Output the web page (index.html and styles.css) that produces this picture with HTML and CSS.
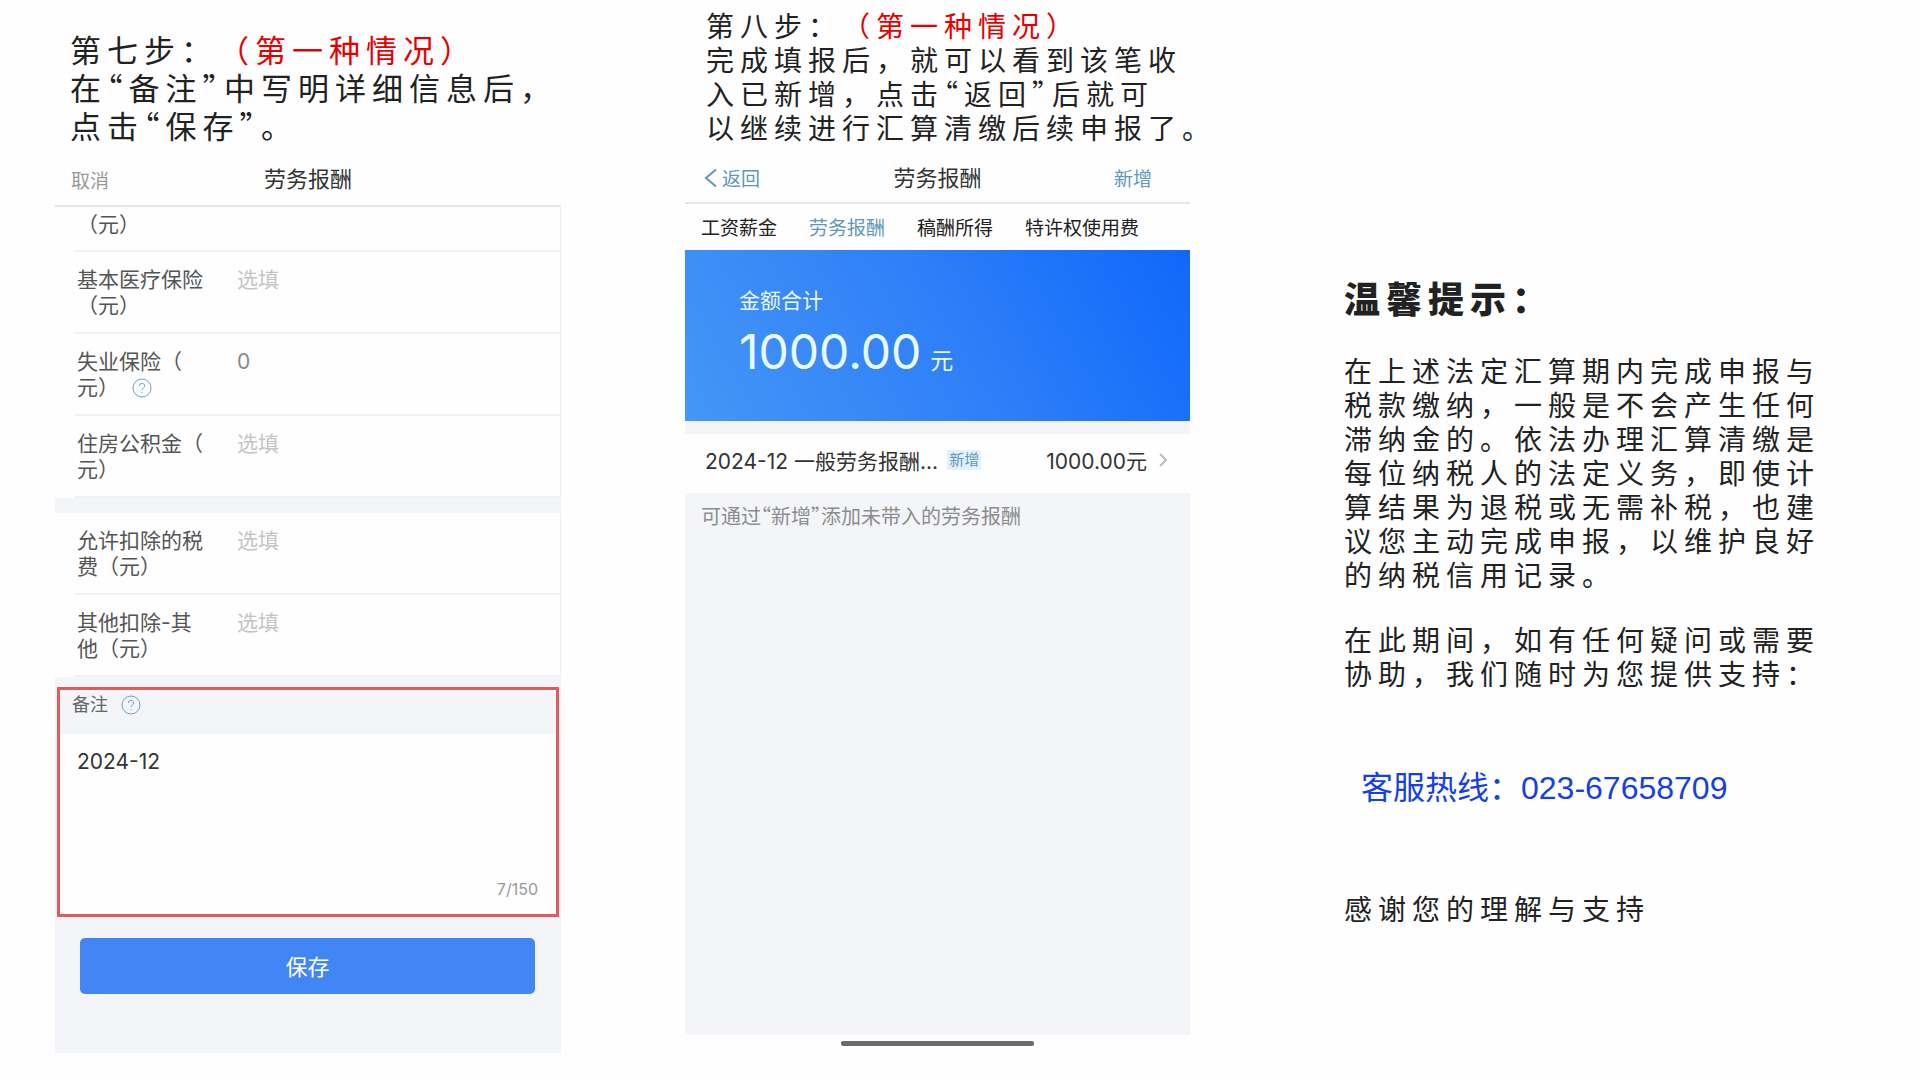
FILE: index.html
```html
<!DOCTYPE html>
<html lang="zh-CN">
<head>
<meta charset="utf-8">
<title>劳务报酬</title>
<link rel="stylesheet" href="styles.css">
</head>
<body>
<main class="page">
  <section class="step">
    <h2 class="intro intro-large">第七步：<span class="case">（第一种情况）</span><br>在<span class="quote">“</span>备注<span class="quote">”</span>中写明详细信息后，<br>点击<span class="quote">“</span>保存<span class="quote">”</span>。</h2>
    <form class="phone phone-form">
      <header class="bar">
        <button type="button" class="bar-action muted">取消</button>
        <h3 class="bar-title">劳务报酬</h3>
      </header>
      <div class="rows">
        <div class="row row-cut"><span class="label">（元）</span></div>
        <div class="row"><label class="label" for="medical">基本医疗保险<br>（元）</label><input class="value" id="medical" placeholder="选填"></div>
        <div class="row"><label class="label" for="jobless">失业保险（<br>元）<svg class="help help-inline" viewBox="0 0 20 20"><circle cx="10" cy="10" r="9"/><path d="M7.400 8a2.600 2.500 0 1 1 3.800 2.100c-.8.5-1.200.9-1.200 2M10 14v1.200"/></svg></label><input class="value" id="jobless" value="0"></div>
        <div class="row"><label class="label" for="housing">住房公积金（<br>元）</label><input class="value" id="housing" placeholder="选填"></div>
      </div>
      <div class="rows rows-next">
        <div class="row"><label class="label" for="taxes">允许扣除的税<br>费（元）</label><input class="value" id="taxes" placeholder="选填"></div>
        <div class="row"><label class="label" for="other">其他扣除-其<br>他（元）</label><input class="value" id="other" placeholder="选填"></div>
      </div>
      <div class="note">
        <label class="note-head" for="note">备注<svg class="help" viewBox="0 0 20 20"><circle cx="10" cy="10" r="9"/><path d="M7.400 8a2.600 2.500 0 1 1 3.800 2.100c-.8.5-1.200.9-1.200 2M10 14v1.200"/></svg></label>
        <textarea class="note-text" id="note">2024-12</textarea>
        <div class="note-count">7/150</div>
      </div>
      <button type="button" class="save">保存</button>
    </form>
  </section>

  <section class="step">
    <h2 class="intro">第八步：<span class="case">（第一种情况）</span><br>完成填报后，就可以看到该笔收<br>入已新增，点击<span class="quote">“</span>返回<span class="quote">”</span>后就可<br>以继续进行汇算清缴后续申报了。</h2>
    <div class="phone phone-list">
      <header class="bar bar-list">
        <button type="button" class="bar-action link"><svg class="back" viewBox="0 0 14 20"><path d="M12 1.500 2 10l10 8.500"/></svg>返回</button>
        <h3 class="bar-title">劳务报酬</h3>
        <button type="button" class="bar-action link add">新增</button>
      </header>
      <nav class="tabs">
        <a href="#salary">工资薪金</a>
        <a href="#labor" class="active">劳务报酬</a>
        <a href="#writing">稿酬所得</a>
        <a href="#royalty">特许权使用费</a>
      </nav>
      <div class="total">
        <div class="total-label">金额合计</div>
        <div class="total-sum"><span class="total-number">1000.00</span><span class="total-unit">元</span></div>
      </div>
      <a class="entry" href="#entry">
        <span>2024-12 一般劳务报酬...</span>
        <span class="tag">新增</span>
        <span class="entry-sum">1000.00元</span>
        <svg class="next" viewBox="0 0 8 14"><path d="m1 1 6 6-6 6"/></svg>
      </a>
      <p class="hint">可通过<span class="quote">“</span>新增<span class="quote">”</span>添加未带入的劳务报酬</p>
      <div class="home"><span class="home-bar"></span></div>
    </div>
  </section>

  <section class="tips">
    <h1 class="tips-title">温馨提示：</h1>
    <p class="tips-text">在上述法定汇算期内完成申报与<br>税款缴纳，一般是不会产生任何<br>滞纳金的。依法办理汇算清缴是<br>每位纳税人的法定义务，即使计<br>算结果为退税或无需补税，也建<br>议您主动完成申报，以维护良好<br>的纳税信用记录。</p>
    <p class="tips-text">在此期间，如有任何疑问或需要<br>协助，我们随时为您提供支持：</p>
    <a class="hotline" href="tel:023-67658709">客服热线：023-67658709</a>
    <p class="tips-text">感谢您的理解与支持</p>
  </section>
</main>
</body>
</html>
```
FILE: styles.css
```css
* {
  box-sizing: border-box;
}

body {
  margin: 0;
  background: #fefefe;
  color: #222;
  font-family: "Noto Sans CJK SC", sans-serif;
  text-spacing-trim: space-all;
}

h1, h2, h3, p {
  margin: 0;
  font-weight: 400;
}

button, input, textarea {
  margin: 0;
  padding: 0;
  border: 0;
  background: none;
  font: inherit;
  color: inherit;
  text-spacing-trim: inherit;
}

a {
  color: inherit;
  text-decoration: none;
}

svg {
  fill: none;
  stroke: currentColor;
}

.page {
  display: grid;
  grid-template-columns: 506fr 505fr 521fr;
  column-gap: 124px;
  padding: 0 85px 26px 55px;
}

.step {
  display: flex;
  flex-direction: column;
  min-width: 0;
}

.intro {
  padding: 8px 0 13px 21px;
  font-size: 28px;
  line-height: 34px;
  letter-spacing: 6px;
  white-space: nowrap;
}

.intro-large {
  padding: 30px 0 13px 15px;
  font-size: 31px;
  line-height: 38px;
}

.case {
  color: #e60000;
}

.quote {
  font-feature-settings: "halt";
}

.phone {
  display: flex;
  flex: 1;
  flex-direction: column;
  font-family: Inter, "Noto Sans CJK SC", sans-serif;
}

.phone-form {
  padding-bottom: 59px;
  background: #f4f5f9;
}

.bar {
  display: grid;
  grid-template-columns: 1fr auto 1fr;
  align-items: center;
  height: 50px;
  padding: 0 16px 4px;
  border-bottom: 2px solid #e6e6e6;
  background: #fefefe;
}

.bar-list {
  height: 47px;
  padding: 0 19px 4px;
}

.bar-action {
  display: flex;
  align-items: center;
  gap: 4px;
  justify-self: start;
  font-size: 19px;
}

.bar-title {
  color: #333;
  font-size: 22px;
  line-height: 30px;
}

.muted {
  color: #999;
}

.link {
  color: #5f97ba;
}

.add {
  justify-self: end;
  margin-right: 19px;
}

.back {
  width: 14px;
  height: 20px;
  stroke-width: 2;
}

.rows {
  padding-left: 20px;
  border-right: 1px solid #eee;
  background: #fefefe;
}

.rows-next {
  margin-top: 15px;
}

.row {
  display: grid;
  grid-template-columns: 160px 1fr;
  align-items: start;
  height: 82px;
  padding: 15px 0 0 2px;
  border-bottom: 2px solid #f0f1f3;
  color: #555;
  font-size: 21px;
  line-height: 26px;
}

.row-cut {
  height: 45px;
  padding-top: 5px;
}

.label {
  white-space: nowrap;
}

.value {
  width: 100%;
  height: 26px;
  color: #888;
}

.value::placeholder {
  color: #c4c4c4;
}

.help {
  width: 20px;
  height: 20px;
  color: #6ba0c8;
}

.help-inline {
  margin-left: 13px;
  vertical-align: -3px;
}

.note {
  display: flex;
  flex-direction: column;
  height: 230px;
  margin: 10px 2px 0;
  border: 3px solid #e05b5b;
  background: #fefefe;
}

.note-head {
  display: flex;
  gap: 13px;
  height: 44px;
  padding: 2px 12px 0;
  background: #f4f5f9;
  color: #666;
  font-size: 18px;
  line-height: 26px;
}

.note-head .help {
  margin-top: 3px;
}

.note-text {
  flex: 1;
  padding: 14px 17px 0;
  resize: none;
  color: #333;
  font-size: 21px;
  line-height: 28px;
}

.note-count {
  padding: 0 18px 15px;
  color: #999;
  font-size: 16px;
  line-height: 20px;
  text-align: right;
}

.save {
  height: 56px;
  margin: 21px 26px 0 25px;
  padding-bottom: 3px;
  border-radius: 5px;
  background: #4285f4;
  color: #fff;
  font-size: 22px;
}

.phone-list {
  background: #f4f5f9;
}

.tabs {
  display: flex;
  gap: 32px;
  height: 46px;
  padding-left: 16px;
  background: #fefefe;
  color: #222;
  font-size: 19px;
  line-height: 50px;
  white-space: nowrap;
}

.active {
  color: #5f97ba;
}

.total {
  height: 171px;
  padding: 36px 54px 0;
  background: linear-gradient(60deg, #4596f6 0%, #3080f8 50%, #0f68fa 100%);
  color: #e8faff;
  font-size: 21px;
  line-height: 30px;
}

.total-sum {
  display: flex;
  align-items: baseline;
  gap: 9px;
  padding-top: 8px;
  line-height: 56px;
}

.total-number {
  font-size: 48px;
}

.total-unit {
  font-size: 23px;
}

.entry {
  display: flex;
  align-items: center;
  height: 59px;
  margin-top: 13px;
  padding: 0 23px 8px 20px;
  background: #fefefe;
  color: #333;
  font-size: 21px;
  white-space: nowrap;
}

.tag {
  margin-left: 9px;
  padding: 0 2px;
  background: #e3f1fb;
  color: #5f97ba;
  font-size: 15px;
  line-height: 20px;
}

.entry-sum {
  margin-left: auto;
}

.next {
  width: 8px;
  height: 14px;
  margin-left: 12px;
  color: #bbb;
  stroke-width: 2;
}

.hint {
  padding: 9px 16px;
  color: #8c8c8c;
  font-family: "Noto Sans CJK SC", sans-serif;
  font-size: 20px;
  line-height: 28px;
}

.home {
  display: flex;
  align-items: center;
  justify-content: center;
  height: 18px;
  margin-top: auto;
  padding-bottom: 2px;
  background: #fefefe;
}

.home-bar {
  width: 193px;
  height: 5px;
  border-radius: 2px;
  background: #6b6b6b;
}

.tips {
  display: flex;
  flex-direction: column;
  gap: 31px;
  padding: 272px 0 0 30px;
  white-space: nowrap;
}

.tips-title {
  font-size: 36px;
  font-weight: 900;
  line-height: 50px;
  letter-spacing: 6px;
}

.tips-text {
  font-size: 28px;
  line-height: 34px;
  letter-spacing: 6px;
}

.hotline {
  margin: 44px 0 49px 17px;
  color: #1440e6;
  font-family: "Liberation Sans", "Noto Sans CJK SC", sans-serif;
  font-size: 32px;
  line-height: 46px;
}
```
